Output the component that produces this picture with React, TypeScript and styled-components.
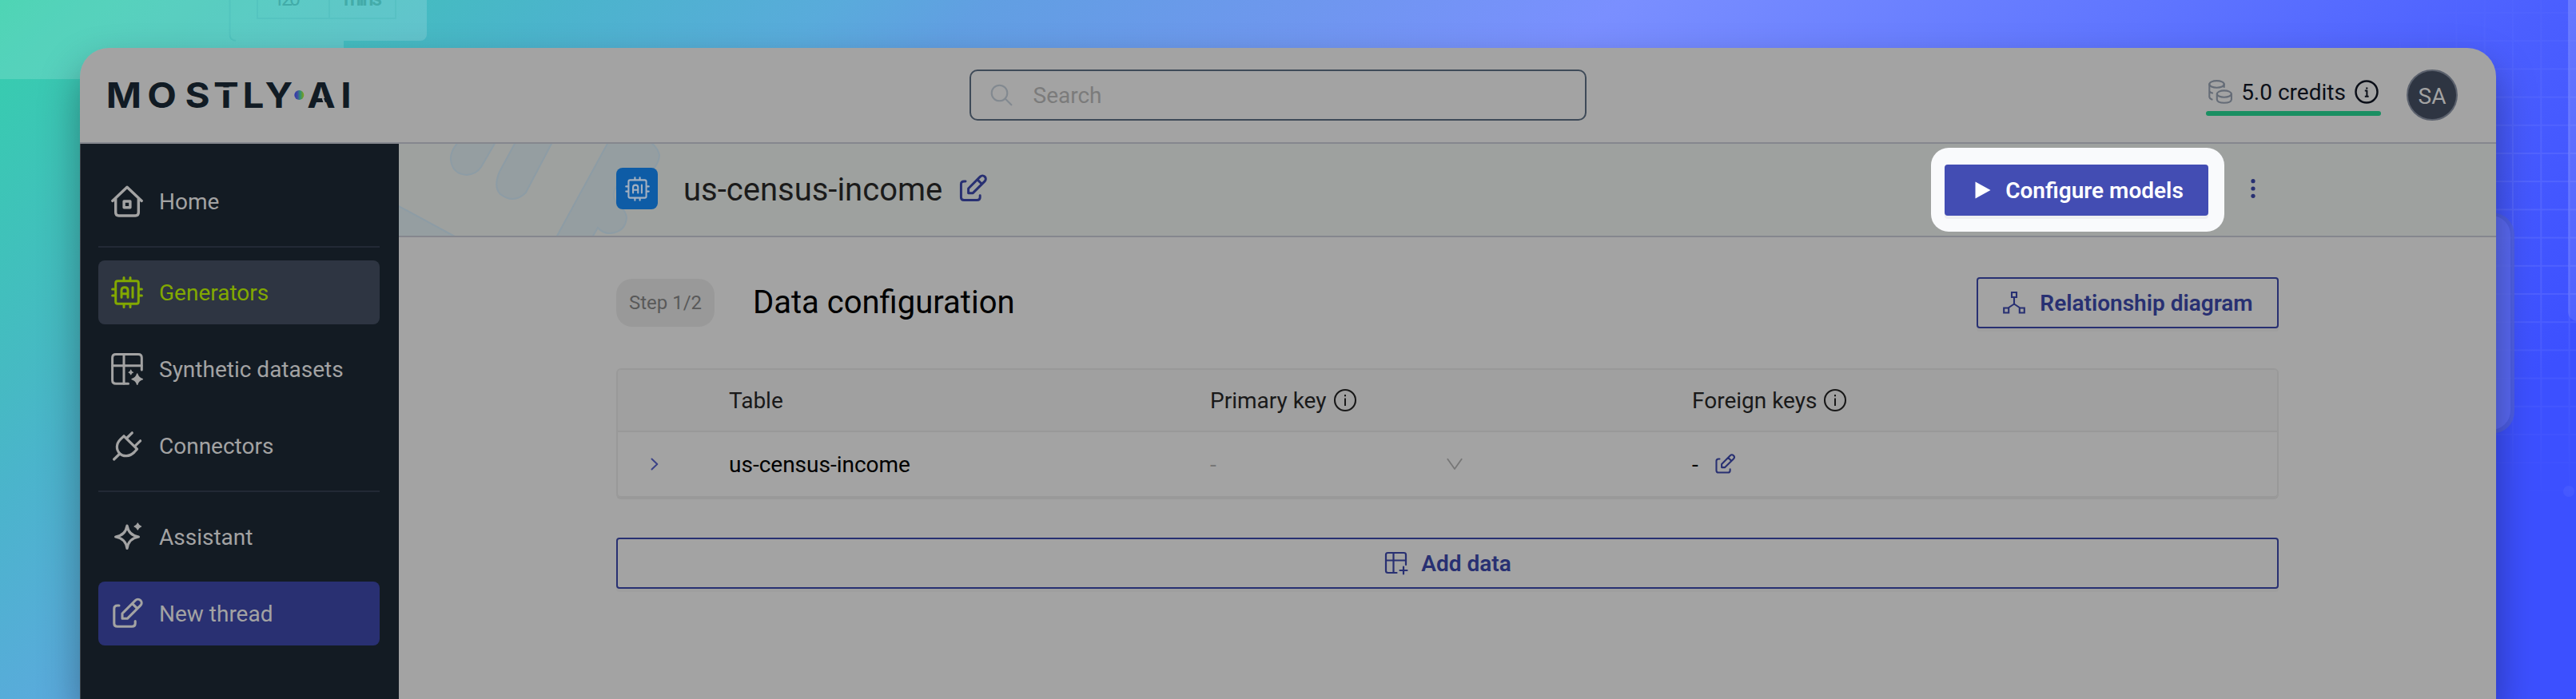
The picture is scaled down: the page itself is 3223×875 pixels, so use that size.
import React from 'react';
import styled, { createGlobalStyle } from 'styled-components';

const c = {
  surface: '#a3a3a3',
  header: '#a0a0a0',
  night: '#131b23',
  nightActive: '#2e3542',
  line: '#85878e',
  softLine: '#999999',
  indigo: '#283072',
  brand: '#434db3',
  lime: '#82a800',
  navText: '#a3a3a3',
};

const GlobalStyle = createGlobalStyle`
  * { box-sizing: border-box; }
  body { margin: 0; font-family: Roboto, "Liberation Sans", sans-serif; font-size: 28px; color: #000; }
  svg { display: block; flex: none; }
`;

const Stage = styled.div`
  position: relative;
  width: 3223px;
  height: 875px;
  padding: 60px 100px 0;
  overflow: hidden;
  background: linear-gradient(139deg, #30cea8 0%, #38cbb0 2.7%, #46bac3 13.2%, #4bb4cc 17%, #59abdb 24.8%, #619fe2 29.3%, #6e97ee 38.8%, #7a8fff 48%, #5f75ff 64%, #4b5fff 75.6%, #3c50ff 88%, #3c50ff 100%);
`;

const BackdropSvg = styled.svg`
  position: absolute;
  inset: 0;
`;

const WindowShadow = styled.div`
  position: relative;
  border-radius: 36px 36px 0 0;
  box-shadow: 0 24px 50px rgba(0, 0, 0, 0.34);
`;

const Window = styled.div`
  display: flex;
  flex-direction: column;
  height: 815px;
  border-radius: 36px 36px 0 0;
  overflow: hidden;
  background: ${c.surface};
`;

const TopBar = styled.header`
  display: flex;
  align-items: flex-start;
  justify-content: space-between;
  height: 120px;
  padding: 27px 48px 0 35px;
  border-bottom: 2px solid ${c.line};
  flex: none;
`;

const Side = styled.div<{ $align: 'flex-start' | 'flex-end' }>`
  display: flex;
  flex: 1;
  gap: 32px;
  justify-content: ${(p) => p.$align};
`;

const LogoWrap = styled.div`
  padding-top: 16px;

  svg { overflow: visible; }
`;

const SearchBox = styled.div`
  display: flex;
  align-items: center;
  gap: 26px;
  width: 772px;
  height: 64px;
  margin-right: 13px;
  padding: 0 24px;
  border: 2px solid #3e4a58;
  border-radius: 10px;
  color: #7b7b7b;
`;

const Credits = styled.div`
  width: 219px;
`;

const CreditsRow = styled.div`
  display: flex;
  align-items: center;
  justify-content: space-between;
  height: 52px;
  padding: 4px 3px 0;
  color: #0b0f18;
  white-space: nowrap;
`;

const CreditsMeter = styled.div`
  height: 6px;
  border-radius: 3px;
  background: #1a8f62;
`;

const Avatar = styled.div`
  display: flex;
  align-items: center;
  justify-content: center;
  width: 64px;
  height: 64px;
  padding-top: 3px;
  border: 2px solid #5b616d;
  border-radius: 50%;
  background: ${c.nightActive};
  color: ${c.navText};
`;

const Body = styled.div`
  display: flex;
  flex: 1;
`;

const Sidebar = styled.nav`
  display: flex;
  flex-direction: column;
  gap: 16px;
  width: 399px;
  padding: 32px 24px 0 22px;
  border-left: 1px solid #3c4349;
  background: ${c.night};
`;

const NavItem = styled.a<{ $tone?: 'active' | 'primary' }>`
  display: flex;
  align-items: center;
  gap: 20px;
  height: 80px;
  padding-left: 16px;
  border-radius: 8px;
  color: ${(p) => (p.$tone === 'active' ? c.lime : c.navText)};
  background: ${(p) =>
    p.$tone === 'active' ? c.nightActive : p.$tone === 'primary' ? '#293072' : 'transparent'};
`;

const NavDivider = styled.div`
  height: 2px;
  background: #222935;
`;

const Main = styled.main`
  flex: 1;
`;

const TitleBar = styled.div`
  position: relative;
  display: flex;
  align-items: center;
  height: 117px;
  padding: 0 301px 3px 272px;
  border-bottom: 2px solid ${c.line};
  background: #9ea19f;
`;

const Pattern = styled.svg`
  position: absolute;
  left: 0;
  top: 0;
`;

const Badge = styled.div`
  position: relative;
  display: flex;
  align-items: center;
  justify-content: center;
  width: 52px;
  height: 52px;
  border-radius: 8px;
  background: #0e5ca6;
  color: #a3b0c0;
`;

const Title = styled.h1`
  margin: 3px 20px 0 32px;
  font-size: 40px;
  font-weight: 400;
  line-height: 48px;
  color: #1b1b1b;
`;

const EditLink = styled.span`
  color: ${c.indigo};
`;

const TitleActions = styled.div`
  display: flex;
  align-items: center;
  gap: 33px;
  margin-left: auto;
  color: ${c.indigo};
`;

const Spotlight = styled.div`
  display: flex;
  align-items: flex-start;
  width: 367px;
  height: 105px;
  margin-top: 3px;
  padding: 21px 17px;
  border-radius: 22px;
  background: #f9fafc;
`;

const Button = styled.button<{ $kind: 'solid' | 'outline'; $width?: string; $gap?: number }>`
  display: flex;
  align-items: center;
  justify-content: center;
  gap: ${(p) => p.$gap ?? 18}px;
  width: ${(p) => p.$width ?? '100%'};
  height: 64px;
  padding: 0 0 0 ${(p) => (p.$kind === 'solid' ? 7 : 1)}px;
  border: 2px solid ${(p) => (p.$kind === 'solid' ? c.brand : c.indigo)};
  border-radius: 4px;
  background: ${(p) => (p.$kind === 'solid' ? c.brand : 'transparent')};
  color: ${(p) => (p.$kind === 'solid' ? '#ffffff' : c.indigo)};
  box-shadow: 0 4px 0 ${(p) => (p.$kind === 'solid' ? '#eeeff1' : '#9f9f9f')};
  font: 600 28px Roboto, "Liberation Sans", sans-serif;
`;

const Content = styled.section`
  padding: 50px 272px 0;
`;

const Heading = styled.div`
  display: flex;
  align-items: center;
  height: 64px;
  margin-bottom: 50px;
`;

const StepChip = styled.span`
  display: flex;
  align-items: center;
  justify-content: center;
  width: 123px;
  height: 60px;
  border-radius: 20px;
  background: #999999;
  color: #595959;
  font-size: 24px;
`;

const HeadingText = styled.h2`
  margin: 0 auto 0 48px;
  font-size: 40px;
  font-weight: 400;
  line-height: 48px;
`;

const Table = styled.div`
  height: 162px;
  margin-bottom: 50px;
  border: 2px solid ${c.softLine};
  border-radius: 6px;
  box-shadow: 0 2px 0 ${c.softLine};
  overflow: hidden;
`;

const TableRow = styled.div<{ $head?: boolean }>`
  display: grid;
  grid-template-columns: 139px 602px 603px 1fr;
  align-items: center;
  height: ${(p) => (p.$head ? 78 : 80)}px;
  border-bottom: ${(p) => (p.$head ? `2px solid ${c.softLine}` : 'none')};
  background: ${(p) => (p.$head ? c.header : c.surface)};
  color: ${(p) => (p.$head ? '#191919' : '#000')};
`;

const Cell = styled.div<{ $gap?: number; $pad?: number }>`
  display: flex;
  align-items: center;
  gap: ${(p) => p.$gap ?? 0}px;
  padding-left: ${(p) => p.$pad ?? 0}px;
`;

const KeySelect = styled.div`
  display: flex;
  align-items: center;
  justify-content: space-between;
  width: 316px;
  color: #777777;
`;

const strokeProps = {
  fill: 'none',
  stroke: 'currentColor',
  strokeLinecap: 'round' as const,
  strokeLinejoin: 'round' as const,
};

type IconProps = { size?: number; weight?: number };

const Glyph = ({ size = 40, weight = 3, children }: IconProps & { children: React.ReactNode }) => (
  <svg width={size} height={size} viewBox="0 0 40 40" strokeWidth={weight} {...strokeProps}>
    {children}
  </svg>
);

const HomeIcon = () => (
  <Glyph weight={3.4}>
    <path d="M1.8 19.4 L20 2.2 L38.2 19.4" />
    <path d="M5.7 17 V34 Q5.7 38 9.7 38 H30.3 Q34.3 38 34.3 34 V17" />
    <rect x="16.1" y="20" width="7.8" height="7.8" />
  </Glyph>
);

const ChipIcon = ({ size, weight = 3 }: IconProps) => (
  <Glyph size={size} weight={weight}>
    <rect x="5.7" y="5.7" width="28.6" height="28.6" rx="2.5" />
    <path d="M16 1.6 V5 M24 1.6 V5 M16 35 V38.4 M24 35 V38.4 M1.6 16 H5 M1.6 24 H5 M35 16 H38.4 M35 24 H38.4" />
    <path d="M13 26.3 V17.5 Q13 13.7 17 13.7 Q21 13.7 21 17.5 V26.3 M13 21.7 H21 M27 13.7 V26.3" />
  </Glyph>
);

const DatasetIcon = () => (
  <Glyph weight={3}>
    <path d="M38.3 21 V6 Q38.3 1.6 34 1.6 H6 Q1.6 1.6 1.6 6 V34 Q1.6 38.3 6 38.3 H21.5" />
    <path d="M16 2 V38 M2 15.7 H38" />
    <path fill="currentColor" strokeWidth="1.4" d="M32.7 26 Q34.2 31.2 39.4 32.7 Q34.2 34.2 32.7 39.4 Q31.2 34.2 26 32.7 Q31.2 31.2 32.7 26Z" />
    <path fill="currentColor" strokeWidth="1" d="M24.7 21.2 Q25.2 23.7 27.6 24.2 Q25.2 24.7 24.7 27.2 Q24.2 24.7 21.8 24.2 Q24.2 23.7 24.7 21.2Z" />
  </Glyph>
);

const PlugIcon = () => (
  <Glyph weight={3.2}>
    <path d="M16 7.8 L32.5 24.2 L29 28 C23 34 15 33.8 11 29.8 C6 25 6 17.5 12 11.6 Z" />
    <path d="M10.8 30 L3.6 37 M19.5 10.5 L26.3 3.8 M29.6 20.6 L36.6 13.8" />
  </Glyph>
);

const SparkleIcon = () => (
  <Glyph weight={3.2}>
    <path d="M20 6 Q22 18 34.4 20 Q22 22 20 34.4 Q18 22 5.6 20 Q18 18 20 6Z" />
    <path fill="currentColor" strokeWidth="1.2" d="M33.3 2.9 Q34.5 5.8 37.6 7 Q34.5 8.2 33.3 11.1 Q32.1 8.2 29 7 Q32.1 5.8 33.3 2.9Z" />
  </Glyph>
);

const PencilIcon = ({ size, weight = 3.1 }: IconProps) => (
  <Glyph size={size} weight={weight}>
    <path d="M10 10 H8 Q3.8 10 3.8 14 V32.2 Q3.8 36.2 8 36.2 H26 Q30.2 36.2 30.2 32.2 V29.6" />
    <path d="M14 26.3 V20 L30.4 3.5 A4.5 4.5 0 0 1 36.8 9.9 L20.3 26.3 Z M26.6 7.6 L32.6 13.6" />
  </Glyph>
);

const TableAddIcon = () => (
  <svg width="30" height="30" viewBox="0 0 30 30" strokeWidth="2.2" {...strokeProps}>
    <path d="M27 17 V4.5 Q27 2 24.5 2 H4.5 Q2 2 2 4.5 V24.5 Q2 27 4.5 27 H15.5 M11.5 2 V27 M2 11.5 H27" />
    <path d="M24 19.5 V28.5 M19.5 24 H28.5" />
  </svg>
);

const DiagramIcon = () => (
  <svg width="28" height="28" viewBox="0 0 28 28" strokeWidth="2.1" {...strokeProps} strokeLinejoin="miter">
    <path d="M11 1 H17 V7 H11Z M1.2 20.5 H7.2 V26.5 H1.2Z M20.8 20.5 H26.8 V26.5 H20.8Z M14 7 V15.5 M14 15.5 L6.5 20.5 M14 15.5 L21.5 20.5" />
  </svg>
);

const InfoIcon = ({ serif = false }: { serif?: boolean }) => (
  <svg width="30" height="30" viewBox="0 0 30 30" strokeWidth={serif ? 2.5 : 2.1} {...strokeProps} strokeLinecap="butt">
    <circle cx="15" cy="15" r={serif ? 13.5 : 13} />
    {serif ? (
      <path strokeWidth="2" d="M12.8 13.6 H15.4 V20.8 M12.8 20.8 H17.6 M14.2 10.4 H16.4" />
    ) : (
      <path strokeWidth="2" d="M15 12.5 V22 M15 8 V10.3" />
    )}
  </svg>
);

const CoinsIcon = () => (
  <svg width="30" height="30" viewBox="0 0 30 30" strokeWidth="2.1" {...strokeProps} stroke="#656c77">
    <ellipse cx="10.5" cy="5.4" rx="9.2" ry="4.3" />
    <path d="M1.3 5.4 V21.5 Q1.6 23.5 4.5 24.6 M1.3 14 Q2 15.8 5 16.6 M19.7 5.4 V9" />
    <ellipse cx="19.8" cy="17.6" rx="9" ry="4.2" />
    <path d="M10.8 17.6 V24.6 C11.5 30.2 28.2 30.2 28.9 24.6 V17.6" />
  </svg>
);

const SearchIcon = () => (
  <svg width="28" height="28" viewBox="0 0 28 28" strokeWidth="2.1" {...strokeProps} stroke="#828990">
    <circle cx="11.5" cy="11.5" r="9.8" />
    <path d="M18.6 18.6 L26.4 26.2" />
  </svg>
);

const Logo = () => (
  <svg width="306" height="40" viewBox="0 0 306 40">
    <defs>
      <linearGradient id="dot">
        <stop offset="0" stopColor="#2f35ae" />
        <stop offset=".35" stopColor="#40529b" />
        <stop offset=".6" stopColor="#2f8f76" />
        <stop offset="1" stopColor="#7fa312" />
      </linearGradient>
    </defs>
    <g transform="scale(1.08 1)">
      <text
        x="18.3 62.5 103.7 137 168.5 198.1 247.2 275.9"
        y="32.2"
        textAnchor="middle"
        fontFamily="Inter"
        fontWeight="700"
        fontSize="44"
        fill="#111b24"
      >
        MOSTLYAI
      </text>
    </g>
    <rect x="132" y="6.4" width="32" height="3.6" fill={c.surface} />
    <path d="M268.8 20 L272.2 29" stroke={c.surface} strokeWidth="2.2" />
    <circle cx="239.3" cy="16" r="6" fill="url(#dot)" />
  </svg>
);

const Backdrop = () => (
  <BackdropSvg width="3223" height="875" viewBox="0 0 3223 875">
    <defs>
      <pattern id="grid" x="3143" y="15" width="35.3" height="35.2" patternUnits="userSpaceOnUse">
        <path d="M1 0 V36 M0 1 H36" stroke="#fff" strokeOpacity=".08" strokeWidth="2" fill="none" />
      </pattern>
      <radialGradient id="fade" gradientUnits="userSpaceOnUse" cx="3223" cy="290" r="350">
        <stop offset=".25" stopColor="#fff" />
        <stop offset="1" stopColor="#000" />
      </radialGradient>
      <mask id="gridMask" maskUnits="userSpaceOnUse" x="2860" y="0" width="363" height="660">
        <rect x="2860" y="0" width="363" height="660" fill="url(#fade)" />
      </mask>
      <linearGradient id="pane" x1="0" x2="0" y1="0" y2="1">
        <stop offset="0" stopColor="#fff" stopOpacity=".16" />
        <stop offset="1" stopColor="#fff" stopOpacity=".1" />
      </linearGradient>
    </defs>
    <path d="M0 0 H287 V43 Q287 51 295 51 H430 V99 H0Z" fill="#fff" opacity=".15" />
    <rect x="287" y="-20" width="247" height="71" rx="8" fill="#fff" opacity=".15" />
    <path d="M287.5 0 V43 Q288 50 295 51" stroke="#45b5b5" strokeOpacity=".3" strokeWidth="2" fill="none" />
    <path d="M322 0 V23 H495 V0 M412 0 V23" stroke="#45b5b5" strokeOpacity=".3" strokeWidth="2" fill="none" />
    <g fontFamily="Roboto" fontSize="25" fill="#3fa8a5" fillOpacity=".9">
      <text x="342" y="7" textLength="34">120</text>
      <text x="430" y="7" textLength="48" fontWeight="600">mins</text>
    </g>
    <rect x="2860" width="363" height="660" fill="url(#grid)" mask="url(#gridMask)" />
    <rect x="3060" y="266" width="86" height="277" rx="28" fill="#5262d8" opacity=".7" />
    <rect x="3060" y="270" width="81" height="268" rx="24" fill="#6272ff" opacity=".6" />
    <rect x="3213" y="-20" width="60" height="422" rx="12" fill="url(#pane)" />
    <ellipse cx="3214" cy="615" rx="7" ry="7" fill="#fff" opacity=".05" />
  </BackdropSvg>
);

const TitlePattern = () => (
  <Pattern width="400" height="115" viewBox="0 0 400 115" fill="#959ea1" stroke="#8d9ca5" strokeWidth="2">
    <path d="M74 -2 Q64 10 65 20 Q67 38 85 39 Q97 38 103 29 L121 -2Z" />
    <path d="M146 -2 L126 35 Q118 54 127 63 Q144 76 159 61 L192 -2Z" />
    <path d="M262 -2 L197 117 H242 L249 105 Q256 113 265 112 Q284 110 285 92 Q284 84 276 78 Q264 66 272 54 L320 30 Q326 21 326 14 Q324 5 315 -2Z" />
    <path d="M-2 77 L72 117 H-2Z" />
  </Pattern>
);

export default function App() {
  return (
    <>
      <GlobalStyle />
      <Stage>
        <Backdrop />
        <WindowShadow>
          <Window>
            <TopBar>
              <Side $align="flex-start">
                <LogoWrap>
                  <Logo />
                </LogoWrap>
              </Side>
              <SearchBox>
                <SearchIcon />
                <span>Search</span>
              </SearchBox>
              <Side $align="flex-end">
                <Credits>
                  <CreditsRow>
                    <CoinsIcon />
                    <span>5.0 credits</span>
                    <InfoIcon serif />
                  </CreditsRow>
                  <CreditsMeter />
                </Credits>
                <Avatar>SA</Avatar>
              </Side>
            </TopBar>
            <Body>
              <Sidebar>
                <NavItem>
                  <HomeIcon />
                  Home
                </NavItem>
                <NavDivider />
                <NavItem $tone="active">
                  <ChipIcon />
                  Generators
                </NavItem>
                <NavItem>
                  <DatasetIcon />
                  Synthetic datasets
                </NavItem>
                <NavItem>
                  <PlugIcon />
                  Connectors
                </NavItem>
                <NavDivider />
                <NavItem>
                  <SparkleIcon />
                  Assistant
                </NavItem>
                <NavItem $tone="primary">
                  <PencilIcon />
                  New thread
                </NavItem>
              </Sidebar>
              <Main>
                <TitleBar>
                  <TitlePattern />
                  <Badge>
                    <ChipIcon size={31} weight={2.7} />
                  </Badge>
                  <Title>us-census-income</Title>
                  <EditLink>
                    <PencilIcon size={36} weight={3.3} />
                  </EditLink>
                  <TitleActions>
                    <Spotlight>
                      <Button $kind="solid" $width="330px" $gap={18}>
                        <svg width="20" height="22" viewBox="0 0 20 22">
                          <path d="M0.5 0.5 L19.5 11 L0.5 21.5Z" fill="currentColor" />
                        </svg>
                        Configure models
                      </Button>
                    </Spotlight>
                    <svg width="6" height="24" viewBox="0 0 6 24" fill="currentColor">
                      <circle cx="3" cy="2.7" r="2.6" />
                      <circle cx="3" cy="12" r="2.6" />
                      <circle cx="3" cy="21.3" r="2.6" />
                    </svg>
                  </TitleActions>
                </TitleBar>
                <Content>
                  <Heading>
                    <StepChip>Step 1/2</StepChip>
                    <HeadingText>Data configuration</HeadingText>
                    <Button $kind="outline" $width="378px" $gap={18}>
                      <DiagramIcon />
                      Relationship diagram
                    </Button>
                  </Heading>
                  <Table>
                    <TableRow $head>
                      <Cell />
                      <Cell>Table</Cell>
                      <Cell $gap={8}>
                        Primary key
                        <InfoIcon />
                      </Cell>
                      <Cell $gap={8}>
                        Foreign keys
                        <InfoIcon />
                      </Cell>
                    </TableRow>
                    <TableRow>
                      <Cell $pad={41}>
                        <svg width="10" height="16" viewBox="0 0 10 16" strokeWidth="2" {...strokeProps} stroke="#3b4287">
                          <path d="M1.5 1.5 L8.3 8 L1.5 14.5" />
                        </svg>
                      </Cell>
                      <Cell>us-census-income</Cell>
                      <Cell>
                        <KeySelect>
                          <span>-</span>
                          <svg width="20" height="16" viewBox="0 0 20 16" strokeWidth="1.8" {...strokeProps}>
                            <path d="M1.3 1.8 L10 14 L18.7 1.8" />
                          </svg>
                        </KeySelect>
                      </Cell>
                      <Cell $gap={20}>
                        <span>-</span>
                        <EditLink>
                          <PencilIcon size={26} weight={3.2} />
                        </EditLink>
                      </Cell>
                    </TableRow>
                  </Table>
                  <Button $kind="outline" $gap={16}>
                    <TableAddIcon />
                    Add data
                  </Button>
                </Content>
              </Main>
            </Body>
          </Window>
        </WindowShadow>
      </Stage>
    </>
  );
}
